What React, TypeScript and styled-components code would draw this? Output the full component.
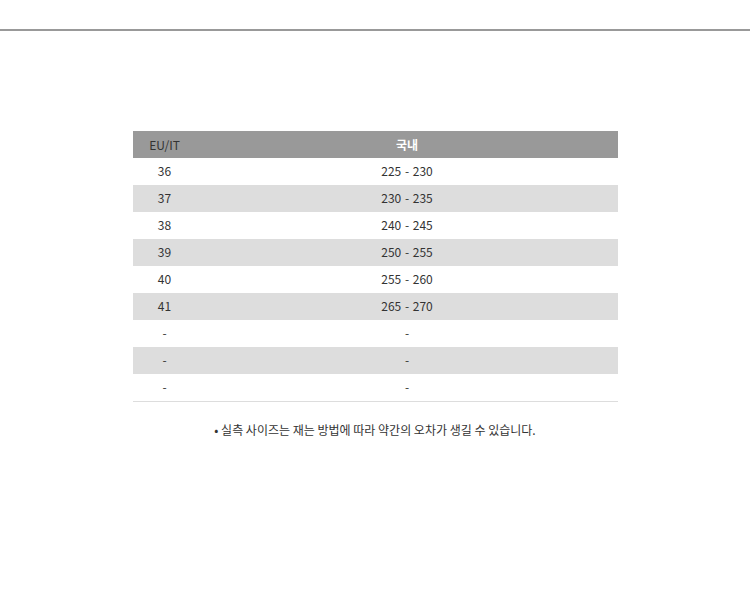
import React, { FC } from 'react';
import styled, { createGlobalStyle } from 'styled-components';

const GlobalStyle = createGlobalStyle`
    body {
        margin: 0;
        background: #fff;
        font-family: "Noto Sans CJK KR", "Noto Sans", sans-serif;
        color: #333;
    }
`;

const Page = styled.div`
    padding-top: 29px;
`;

const TopRule = styled.hr`
    margin: 0;
    border: none;
    height: 2px;
    background: #999;
`;

const SizeTable = styled.table`
    width: 485px;
    margin: 100px auto 0;
    border-collapse: collapse;
    border-bottom: 1px solid #ddd;
    font-size: 12px;
`;

const HeadCell = styled.th<{ strong?: boolean }>`
    box-sizing: border-box;
    height: 27px;
    padding: 0 0 1px;
    background: #999;
    text-align: center;
    font-weight: ${props => props.strong ? 700 : 400};
    color: ${props => props.strong ? "#fff" : "#333"};
    width: ${props => props.strong ? "auto" : "64px"};
`;

const Row = styled.tr<{ striped?: boolean }>`
    background: ${props => props.striped ? "#ddd" : "#fff"};
`;

const Cell = styled.td`
    box-sizing: border-box;
    height: 27px;
    padding: 0 0 2px;
    text-align: center;
    color: #333;
    word-spacing: 1px;
`;

const Note = styled.p`
    margin: 20px 0 0;
    text-align: center;
    font-size: 12px;
    line-height: 16px;
    color: #333;
`;

const sizes: [string, string][] = [
    ["36", "225 - 230"],
    ["37", "230 - 235"],
    ["38", "240 - 245"],
    ["39", "250 - 255"],
    ["40", "255 - 260"],
    ["41", "265 - 270"],
    ["-", "-"],
    ["-", "-"],
    ["-", "-"],
];

const App: FC = () => {
    return (
        <Page>
            <GlobalStyle />
            <TopRule />
            <SizeTable>
                <thead>
                    <tr>
                        <HeadCell>EU/IT</HeadCell>
                        <HeadCell strong>국내</HeadCell>
                    </tr>
                </thead>
                <tbody>
                    {sizes.map(([eu, kr], i) => (
                        <Row key={i} striped={i % 2 === 1}>
                            <Cell>{eu}</Cell>
                            <Cell>{kr}</Cell>
                        </Row>
                    ))}
                </tbody>
            </SizeTable>
            <Note>• 실측 사이즈는 재는 방법에 따라 약간의 오차가 생길 수 있습니다.</Note>
        </Page>
    );
};

export default App;
